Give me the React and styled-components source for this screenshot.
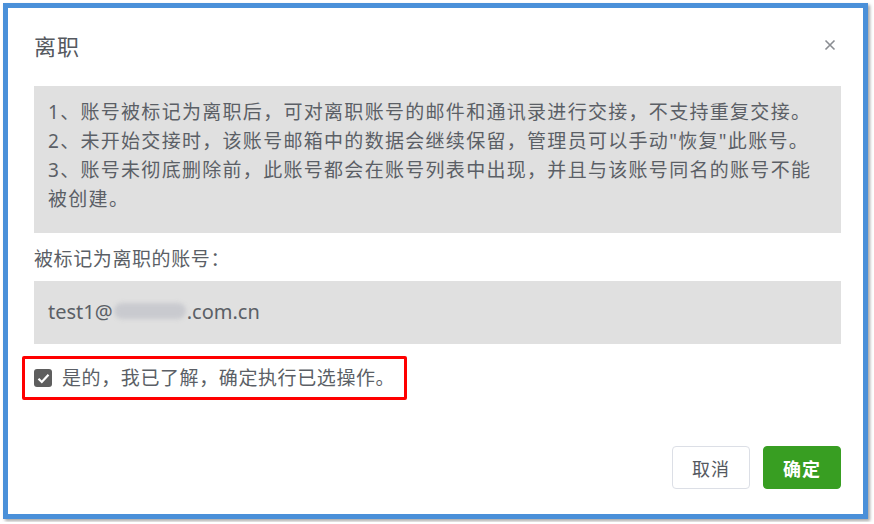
import React from 'react';
import styled, { createGlobalStyle } from 'styled-components';

const GlobalStyle = createGlobalStyle`
  html, body {
    margin: 0;
    padding: 0;
    background: #ffffff;
  }
  body {
    font-family: "Noto Sans", "Noto Sans CJK SC", sans-serif;
  }
`;

const Frame = styled.div`
  box-sizing: border-box;
  width: 865px;
  height: 516px;
  margin: 3px;
  border: 5px solid #4a90d9;
  background: #fff;
  box-shadow: 2px 2px 3px rgba(0, 0, 0, 0.35);
  display: flex;
  flex-direction: column;
  padding: 0 22px 0 26px;
`;

const Header = styled.div`
  height: 78px;
  display: flex;
  align-items: center;
  justify-content: space-between;
  padding-bottom: 4px;
  box-sizing: border-box;
`;

const Title = styled.h1`
  margin: 0;
  font-size: 22px;
  font-weight: 400;
  color: #55595f;
  letter-spacing: 1px;
`;

const CloseButton = styled.button`
  border: none;
  background: none;
  padding: 0;
  margin-right: 4px;
  width: 14px;
  height: 14px;
  display: flex;
  align-items: center;
  justify-content: center;
  cursor: pointer;
`;

const InfoBox = styled.div`
  background: #e0e0e0;
  padding: 12px 14px 19px;
  font-size: 19px;
  letter-spacing: 1.3px;
  line-height: 29px;
  color: #5b5f66;
`;

const Label = styled.div`
  margin-top: 12px;
  font-size: 19px;
  letter-spacing: 0.6px;
  line-height: 28px;
  color: #5b5f66;
`;

const EmailBox = styled.div`
  margin-top: 8px;
  height: 63px;
  background: #e0e0e0;
  display: flex;
  align-items: center;
  padding: 0 14px 3px;
  box-sizing: border-box;
  font-size: 20px;
  color: #5b5f66;
`;

const Blur = styled.span`
  display: inline-block;
  width: 72px;
  height: 16px;
  margin: 0 1px;
  border-radius: 8px;
  background: #c9cacf;
  filter: blur(2px);
  vertical-align: middle;
`;

const ConfirmRow = styled.label`
  align-self: flex-start;
  margin: 12px 0 0 -12px;
  border: 3px solid #ff0000;
  border-radius: 2px;
  padding: 5px 9px;
  display: flex;
  align-items: center;
  gap: 10px;
  font-size: 19px;
  letter-spacing: 0.6px;
  color: #5b5f66;
  line-height: 28px;
  cursor: pointer;
`;

const Check = styled.span`
  width: 18px;
  height: 18px;
  border-radius: 3px;
  background: ${(p) => (p.$checked ? '#5e5e5e' : '#fff')};
  display: flex;
  align-items: center;
  justify-content: center;
  flex-shrink: 0;
`;

const Footer = styled.div`
  margin-top: auto;
  margin-bottom: 25px;
  display: flex;
  justify-content: flex-end;
  gap: 13px;
`;

const Button = styled.button`
  width: 78px;
  height: 43px;
  border-radius: 4px;
  font-family: "Noto Sans", "Noto Sans CJK SC", sans-serif;
  font-size: 18px;
  letter-spacing: 1px;
  cursor: pointer;
  border: 1px solid ${(p) => (p.$primary ? '#389e22' : '#dcdfe6')};
  background: ${(p) => (p.$primary ? '#389e22' : '#fff')};
  color: ${(p) => (p.$primary ? '#fff' : '#55595f')};
  font-weight: ${(p) => (p.$primary ? 700 : 400)};
`;

const notes = [
  '1、账号被标记为离职后，可对离职账号的邮件和通讯录进行交接，不支持重复交接。',
  '2、未开始交接时，该账号邮箱中的数据会继续保留，管理员可以手动"恢复"此账号。',
  '3、账号未彻底删除前，此账号都会在账号列表中出现，并且与该账号同名的账号不能被创建。',
];

export default function App() {
  return (
    <>
      <GlobalStyle />
      <Frame>
        <Header>
          <Title>离职</Title>
          <CloseButton title="关闭">
            <svg width="12" height="12" viewBox="0 0 12 12">
              <path d="M1.5 1.5 L10.5 10.5 M10.5 1.5 L1.5 10.5" stroke="#8a8d92" strokeWidth="1.6" />
            </svg>
          </CloseButton>
        </Header>
        <InfoBox>
          {notes.map((n) => (
            <div key={n}>{n}</div>
          ))}
        </InfoBox>
        <Label>被标记为离职的账号：</Label>
        <EmailBox>
          test1@<Blur />.com.cn
        </EmailBox>
        <ConfirmRow>
          <Check $checked>
            <svg width="13" height="11" viewBox="0 0 13 11">
              <path d="M1.5 5.8 L4.8 9 L11.5 1.8" fill="none" stroke="#fff" strokeWidth="2.2" />
            </svg>
          </Check>
          是的，我已了解，确定执行已选操作。
        </ConfirmRow>
        <Footer>
          <Button>取消</Button>
          <Button $primary>确定</Button>
        </Footer>
      </Frame>
    </>
  );
}
